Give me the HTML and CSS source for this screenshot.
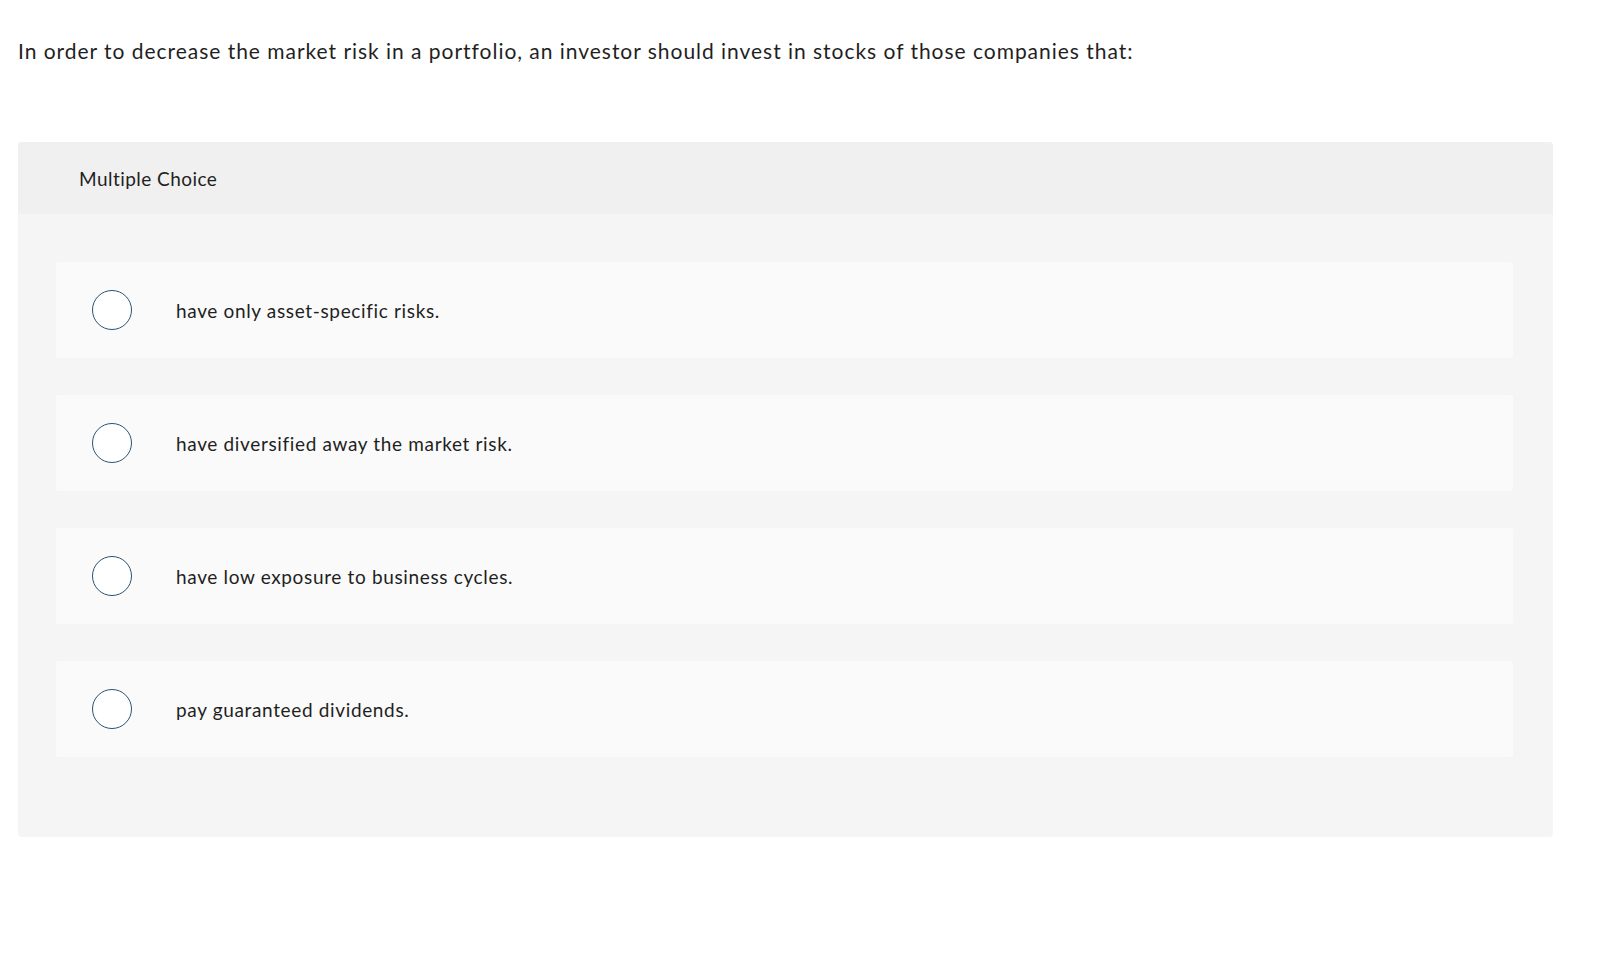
FILE: index.html
```html
<!DOCTYPE html>
<html lang="en">
<head>
<meta charset="utf-8">
<title>Multiple Choice</title>
<link rel="stylesheet" href="styles.css">
</head>
<body>
<main class="page">
  <p class="question">In order to decrease the market risk in a portfolio, an investor should invest in stocks of those companies that:</p>
  <section class="card">
    <header class="card-header">Multiple Choice</header>
    <div class="card-body">
      <label class="option"><span class="radio"></span><span class="option-text">have only asset-specific risks.</span></label>
      <label class="option"><span class="radio"></span><span class="option-text">have diversified away the market risk.</span></label>
      <label class="option"><span class="radio"></span><span class="option-text">have low exposure to business cycles.</span></label>
      <label class="option"><span class="radio"></span><span class="option-text">pay guaranteed dividends.</span></label>
    </div>
  </section>
</main>
</body>
</html>
```

FILE: styles.css
```css
html, body {
  margin: 0;
  padding: 0;
  background: #ffffff;
}
body {
  font-family: Lato, "Open Sans", "Liberation Sans", sans-serif;
  color: #1f1f1f;
  font-variant-ligatures: none;
}
.page {
  padding: 36px 48px 0 18px;
}
.question {
  margin: 0;
  font-size: 21px;
  line-height: 30px;
  letter-spacing: 0.97px;
}
.card {
  margin-top: 76px;
  width: 1535px;
  background: #f5f5f5;
  border-radius: 4px;
  overflow: hidden;
}
.card-header {
  height: 72px;
  background: #f0f0f0;
  display: flex;
  align-items: center;
  padding-left: 61px;
  font-size: 19px;
  letter-spacing: 0.45px;
}
.card-body {
  padding: 48px 40px 80px 38px;
  display: flex;
  flex-direction: column;
  gap: 37px;
}
.option {
  height: 96px;
  background: #fafafa;
  border-radius: 3px;
  display: flex;
  align-items: center;
  padding-left: 36px;
}
.radio {
  width: 38px;
  height: 38px;
  border: 1.5px solid #2d5273;
  border-radius: 50%;
  background: #ffffff;
  flex: none;
}
.option-text {
  margin-left: 44px;
  font-size: 19px;
  letter-spacing: 0.65px;
}
```
